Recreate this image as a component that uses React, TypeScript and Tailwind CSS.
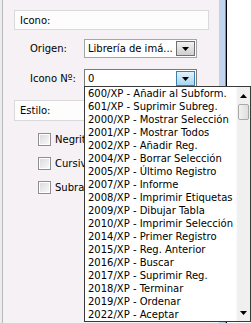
import React from "react";

const items = [
  "600/XP - Añadir al Subform.",
  "601/XP - Suprimir Subreg.",
  "2000/XP - Mostrar Selección",
  "2001/XP - Mostrar Todos",
  "2002/XP - Añadir Reg.",
  "2004/XP - Borrar Selección",
  "2005/XP - Último Registro",
  "2007/XP - Informe",
  "2008/XP - Imprimir Etiquetas",
  "2009/XP - Dibujar Tabla",
  "2010/XP - Imprimir Selección",
  "2014/XP - Primer Registro",
  "2015/XP - Reg. Anterior",
  "2016/XP - Buscar",
  "2017/XP - Suprimir Reg.",
  "2018/XP - Terminar",
  "2019/XP - Ordenar",
  "2022/XP - Aceptar",
];

function Tri({ up = false }: { up?: boolean }) {
  return (
    <svg width="7" height="4" viewBox="0 0 7 4" className="block">
      {up ? <path d="M0 4 L3.5 0 L7 4 Z" fill="#000" /> : <path d="M0 0 L7 0 L3.5 4 Z" fill="#000" />}
    </svg>
  );
}

function Checkbox({ label }: { label: string }) {
  return (
    <div className="flex items-center h-[13px]">
      <div className="w-[13px] h-[13px] border border-[#8f8f8f] bg-white p-[1px]">
        <div className="w-full h-full bg-gradient-to-br from-[#dcdcdc] to-[#f8f8f8]" />
      </div>
      <span className="ml-[4px] leading-[13px]">{label}</span>
    </div>
  );
}

export default function App() {
  return (
    <div
      className="relative w-[251px] h-[323px] overflow-hidden flex text-[10px] text-black"
      style={{ fontFamily: '"DejaVu Sans", Verdana, sans-serif' }}
    >
      <div className="w-[2px] h-full bg-[#ececec]" />
      <div className="w-[1px] h-full bg-[#b9b9b9]" />
      <div className="w-[216px] h-full bg-[#f5f1f5] flex flex-col pt-[10px]">
        <div className="ml-[11px] w-[195px] h-[20px] border border-[#dadada] bg-[#fdfdfd] flex items-center pl-[5px]">
          Icono:
        </div>
        <div className="mt-[9px] flex items-center h-[19px]">
          <span className="pl-[27px] w-[81px]">Origen:</span>
          <div className="w-[113px] h-[19px] border border-[#a5a5a5] bg-white flex items-center pl-[3px] pr-[1px]">
            <span className="flex-1 whitespace-nowrap overflow-hidden">Librería de imá...</span>
            <div className="w-[19px] h-[15px] border border-[#707070] bg-gradient-to-b from-[#f2f2f2] to-[#cfcfcf] flex items-center justify-center">
              <Tri />
            </div>
          </div>
        </div>
        <div className="mt-[11px] flex items-center h-[19px]">
          <span className="pl-[27px] w-[81px]">Icono Nº:</span>
          <div className="w-[113px] h-[19px] border border-[#7a7a7a] bg-white flex items-center pl-[3px] pr-[1px]">
            <span className="flex-1">0</span>
            <div className="w-[19px] h-[15px] border border-[#3c7fb1] bg-gradient-to-b from-[#e2f2fb] to-[#a9d5ef] flex items-center justify-center">
              <Tri />
            </div>
          </div>
        </div>
        <div className="mt-[12px] ml-[11px] w-[195px] h-[21px] border border-[#dadada] bg-[#fdfdfd] flex items-center pl-[5px]">
          Estilo:
        </div>
        <div className="mt-[12px] pl-[35px] flex flex-col gap-[11px]">
          <Checkbox label="Negrita" />
          <Checkbox label="Cursiva" />
          <Checkbox label="Subrayado" />
        </div>
      </div>
      <div className="w-[6px] h-full bg-[#bfd4ee]" />
      <div className="w-[1px] h-full bg-[#5c9ad6]" />
      <div className="w-[1px] h-full bg-black" />
      <div className="flex-1 h-full bg-white" />

      <div className="absolute left-[84px] top-[86px] w-[167px] h-[236px] border border-[#3a3a3a] bg-white flex">
        <div className="flex-1 flex flex-col pl-[3px] overflow-hidden">
          {items.map((t) => (
            <div key={t} className="h-[13px] leading-[13px] whitespace-nowrap">
              {t}
            </div>
          ))}
        </div>
        <div className="w-[14px] h-full bg-[#f0f0f0] border-l border-[#fafafa] flex flex-col">
          <div className="h-[17px] flex items-center justify-center">
            <Tri up />
          </div>
          <div className="mx-[1px] h-[16px] rounded-[2px] border border-[#a8a8a8] bg-gradient-to-r from-[#f2f2f2] to-[#dedede]" />
          <div className="flex-1" />
          <div className="h-[17px] flex items-center justify-center">
            <Tri />
          </div>
        </div>
      </div>
    </div>
  );
}
